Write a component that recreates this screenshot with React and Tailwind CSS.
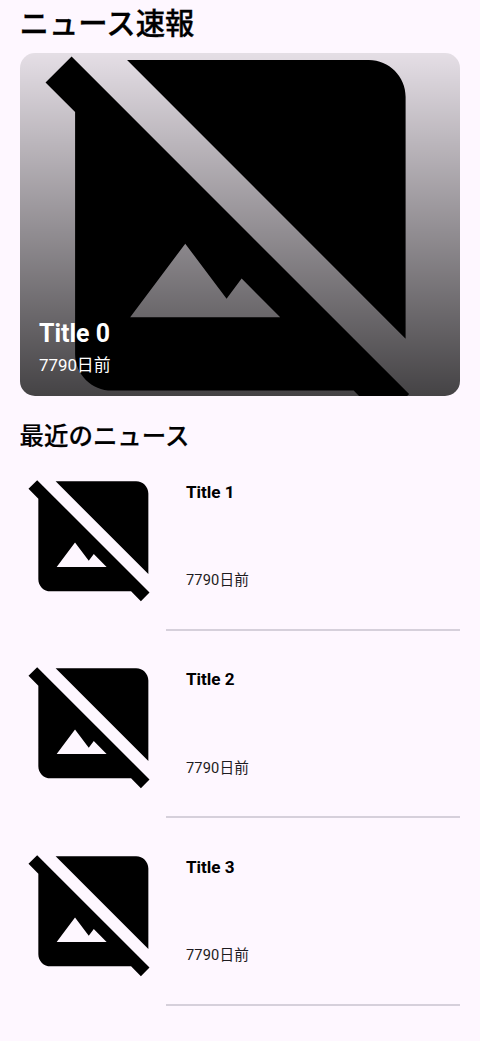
const articles = ["Title 1", "Title 2", "Title 3"];

function ImageNotSupported({ className }) {
  return (
    <svg viewBox="0 0 24 24" fill="black" className={className} aria-hidden="true">
      <path d="M21.19 21.19 2.81 2.81 1.39 4.22 3 5.83V19c0 1.1.9 2 2 2h13.17l1.61 1.61 1.41-1.42zM6 17l3-4 2.25 3 .82-1.1 2.1 2.1H6zm15 1.17L5.83 3H19c1.1 0 2 .9 2 2v13.17z" />
    </svg>
  );
}

function Hero() {
  return (
    <section className="relative mt-[5.4px] flex h-[343px] items-center overflow-hidden rounded-[15px]">
      <ImageNotSupported className="size-[440.7px] shrink-0" />
      <div className="absolute inset-0 flex flex-col justify-end bg-linear-to-b from-black/10 to-black/73 pb-[19px] pl-[19.5px] text-white">
        <h2 className="text-[24.9px] leading-[30px] font-bold">Title 0</h2>
        <p className="mt-[4px] text-[16.9px] leading-[24px] tracking-[-0.05px]">7790日前</p>
      </div>
    </section>
  );
}

function NewsRow({ title }) {
  return (
    <li className="flex h-[187.5px]">
      <ImageNotSupported className="mt-[19.2px] size-[146.7px] shrink-0" />
      <div className="flex flex-1 flex-col justify-between border-b-2 border-[#d6d0db] pt-[37.5px] pb-[38.9px] pl-[19.6px]">
        <h3 className="text-[17.1px] leading-[22px] font-bold text-black">{title}</h3>
        <p className="text-[14.67px] leading-[20px] tracking-[0.15px] text-[#1d1b20]">7790日前</p>
      </div>
    </li>
  );
}

export default function App() {
  return (
    <main className="h-[1041px] overflow-hidden bg-[#fef7ff] px-[19.6px] font-[Roboto,'Noto_Sans_CJK_JP',sans-serif] text-black">
      <h1 className="h-[48px] pt-px text-[29.4px] leading-[47px] font-medium whitespace-nowrap [-webkit-text-stroke:0.3px_black]">ニュース速報</h1>
      <Hero />
      <h2 className="h-[47px] pt-[21.4px] text-[24.44px] leading-[38px] font-medium whitespace-nowrap [-webkit-text-stroke:0.2px_black]">最近のニュース</h2>
      <ul>
        {articles.map((title) => (
          <NewsRow key={title} title={title} />
        ))}
      </ul>
    </main>
  );
}
